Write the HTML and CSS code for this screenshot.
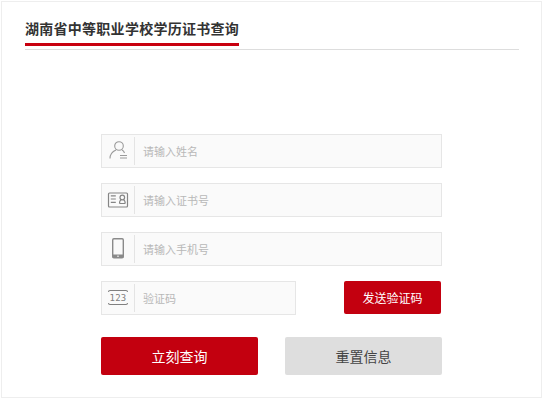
FILE: index.html
```html
<!DOCTYPE html>
<html lang="zh-CN">
<head>
<meta charset="UTF-8">
<title>湖南省中等职业学校学历证书查询</title>
<link rel="stylesheet" href="styles.css">
</head>
<body>
<div class="panel">
    <div class="head">
        <h2 class="title">湖南省中等职业学校学历证书查询</h2>
    </div>
    <form class="form">
        <div class="field">
            <span class="ico">
                <svg width="24" height="24" viewBox="0 0 24 24" fill="none" stroke="#9a9a9a" stroke-width="1.1">
                    <circle cx="13" cy="7" r="4.300"/>
                    <path d="M4 19.500c0-4.500 2.500-7 6-8.500M16 11c1 .5 2 1.500 2.500 3"/>
                    <path d="M14 16.500h7M14 19h7"/>
                </svg>
            </span>
            <span class="ph">请输入姓名</span>
        </div>
        <div class="field">
            <span class="ico">
                <svg width="24" height="24" viewBox="0 0 24 24" fill="none" stroke="#858585" stroke-width="1.200">
                    <rect x="2.500" y="5" width="19" height="14" rx="1"/>
                    <path d="M4.800 7.800h5M4.800 11h5M4.800 14.300h5"/>
                    <circle cx="16.300" cy="9.500" r="2.300"/>
                    <path d="M13.500 15.500c0-2.500 1-3.500 1.800-3.800M19.200 15.500c0-2.500-1-3.500-1.800-3.800M13.500 15.500h5.700"/>
                </svg>
            </span>
            <span class="ph">请输入证书号</span>
        </div>
        <div class="field">
            <span class="ico">
                <svg width="24" height="24" viewBox="0 0 24 24">
                    <rect x="6.700" y="1.700" width="10.600" height="19" rx="1.200" fill="none" stroke="#8a8a8a" stroke-width="1.400"/>
                    <rect x="6.700" y="17.500" width="10.600" height="3.300" fill="#8a8a8a"/>
                    <rect x="11" y="18.700" width="2" height="1" fill="#eee"/>
                </svg>
            </span>
            <span class="ph">请输入手机号</span>
        </div>
        <div class="code-row">
            <div class="field field-code">
                <span class="ico">
                    <svg width="24" height="24" viewBox="0 0 24 24" fill="none" stroke="#808080" stroke-width="1.100">
                        <path d="M2.500 6c0-1 .5-1.500 1.500-1.500h16c1 0 1.500.5 1.500 1.500M2.500 17c0 1 .5 1.500 1.500 1.500h16c1 0 1.500-.5 1.500-1.500"/>
                        <text class="num" x="12" y="14.700" text-anchor="middle">123</text>
                    </svg>
                </span>
                <span class="ph">验证码</span>
            </div>
            <button type="button" class="btn btn-send">发送验证码</button>
        </div>
        <div class="btn-row">
            <button type="button" class="btn btn-main">立刻查询</button>
            <button type="button" class="btn btn-reset">重置信息</button>
        </div>
    </form>
</div>
</body>
</html>
```

FILE: styles.css
```css
body {
    margin: 0;
    background-color: #fff;
    font-family: "Liberation Sans", "Noto Sans CJK SC", sans-serif;
}
.panel {
    box-sizing: border-box;
    width: 541px;
    height: 397px;
    margin: 1px 0 0 1px;
    padding: 0 22px 0 23px;
    border: 1px solid #eee;
}
.head {
    height: 47px;
    border-bottom: 1px solid #ddd;
}
.title {
    display: inline-block;
    box-sizing: border-box;
    height: 44px;
    margin: 0;
    padding-top: 17px;
    border-bottom: 3px solid #c8000f;
    color: #333;
    font-size: 14px;
    line-height: 21px;
    letter-spacing: 0.27px;
}
.form {
    width: 341px;
    margin: 84px 0 0 76px;
}
.field {
    display: flex;
    align-items: center;
    box-sizing: border-box;
    height: 34px;
    margin-bottom: 15px;
    border: 1px solid #e6e6e6;
    background-color: #fafafa;
}
.field-code {
    width: 195px;
    margin-bottom: 0;
}
.ico {
    display: flex;
    align-items: center;
    justify-content: center;
    flex: none;
    width: 32px;
    height: 28px;
    border-right: 1px solid #e4e4e4;
}
.num {
    fill: #808080;
    stroke: none;
    font-family: "DejaVu Sans Mono", monospace;
    font-size: 9px;
    letter-spacing: 0.3px;
}
.ph {
    margin-left: 8px;
    color: #b8b8b8;
    font-size: 11px;
}
.code-row {
    display: flex;
    justify-content: space-between;
}
.btn {
    border: none;
    border-radius: 2px;
    font-family: inherit;
    cursor: pointer;
}
.btn-send {
    width: 97px;
    height: 33px;
    margin-right: 1px;
    background-color: #c3000f;
    color: #fff;
    font-size: 12px;
}
.btn-row {
    display: flex;
    justify-content: space-between;
    margin-top: 22px;
}
.btn-main,
.btn-reset {
    width: 157px;
    height: 38px;
    font-size: 14px;
}
.btn-main {
    background-color: #c3000f;
    color: #fff;
}
.btn-reset {
    background-color: #dedede;
    color: #444;
}
```
